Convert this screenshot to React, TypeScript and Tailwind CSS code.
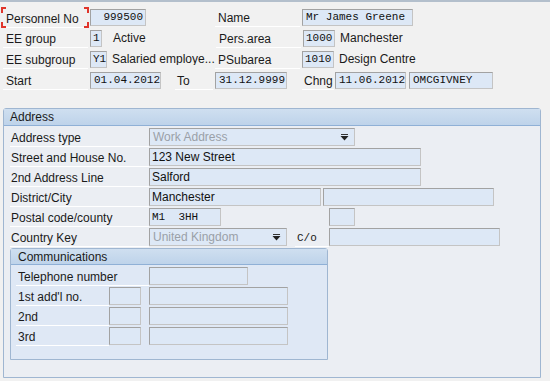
import React from "react";

const sans = { fontFamily: '"Liberation Sans", Arial, sans-serif' };
const mono = { fontFamily: '"Liberation Mono", "DejaVu Sans Mono", monospace' };

// label with the faint underline SAP draws under field captions
const Label: React.FC<{ text: string; w: string; pl?: string; className?: string }> = ({
  text,
  w,
  pl = "pl-[3px]",
  className,
}) => (
  <div
    className={`${w} ${pl} h-[19px] flex items-end pb-[1px] border-b border-white text-[12px] text-[#1a1a1a] leading-none ${className ?? ""}`}
    style={sans}
  >
    <span className="pb-[1px]">{text}</span>
  </div>
);

const Field: React.FC<{
  value?: string;
  w: string;
  right?: boolean;
  mono?: boolean;
  h?: string;
  className?: string;
}> = ({ value = "", w, right, mono: isMono = true, h = "h-[17px]", className }) => (
  <div
    className={`${w} ${h} shrink-0 flex items-center px-[2px] bg-[#dde8f6] border border-[#a2a2a2] border-b-[#c4c4c4] border-r-[#c4c4c4] text-[#111] leading-none ${
      right ? "justify-end" : ""
    } ${isMono ? "text-[11px]" : "text-[12px]"} ${className ?? ""}`}
    style={isMono ? mono : sans}
  >
    <span className="whitespace-pre">{value}</span>
  </div>
);

const Arrow = () => (
  <svg width="9" height="7" viewBox="0 0 9 7">
    <rect x="1" y="0" width="7" height="1" fill="#333" />
    <path d="M0.5 2 L8.5 2 L4.5 6.5 Z" fill="#222" />
  </svg>
);

const Select: React.FC<{ value: string; w: string }> = ({ value, w }) => (
  <div
    className={`${w} h-[18px] shrink-0 flex items-center justify-between pl-[3px] pr-[5px] bg-[#dde8f6] border border-[#a2a2a2] border-b-[#c4c4c4] border-r-[#c4c4c4] text-[12px] text-[#9aa0a8] leading-none`}
    style={sans}
  >
    <span>{value}</span>
    <Arrow />
  </div>
);

const Text: React.FC<{ text: string; className?: string }> = ({ text, className }) => (
  <span className={`text-[12px] text-[#1a1a1a] leading-none whitespace-nowrap ${className ?? ""}`} style={sans}>
    {text}
  </span>
);

const Corner: React.FC<{ pos: string }> = ({ pos }) => (
  <span className={`absolute w-[5px] h-[6px] border-[#e0352b] ${pos}`} />
);

export default function App() {
  return (
    <div className="w-[550px] h-[381px] overflow-hidden bg-[#f1f1f1] border-t-2 border-[#b3bfcc]">
      {/* header block */}
      <div className="pt-[5px] flex flex-col gap-[1px]">
        <div className="h-[20px] flex items-center">
          <div className="relative ml-[1px] w-[88px] h-[21px] flex items-end">
            <Corner pos="left-0 top-0 border-l-2 border-t-2" />
            <Corner pos="right-0 top-0 border-r-2 border-t-2" />
            <Corner pos="left-0 bottom-0 border-l-2 border-b-2" />
            <Corner pos="right-0 bottom-0 border-r-2 border-b-2" />
            <Label text="Personnel No" w="w-[85px] ml-[2px]" />
          </div>
          <Field value="999500" w="w-[56px]" right className="ml-[1px]" />
          <Label text="Name" w="w-[85px]" className="ml-[69px]" />
          <Field value="Mr James Greene" w="w-[111px]" className="ml-[2px] pl-[3px]" />
        </div>
        <div className="h-[20px] flex items-center">
          <Label text="EE group" w="w-[85px]" className="ml-[3px]" />
          <Field value="1" w="w-[12px]" className="ml-[2px]" />
          <Text text="Active" className="ml-[11px] w-[103px]" />
          <Label text="Pers.area" w="w-[85px]" />
          <Field value="1000" w="w-[32px]" className="ml-[2px]" />
          <Text text="Manchester" className="ml-[5px]" />
        </div>
        <div className="h-[20px] flex items-center">
          <Label text="EE subgroup" w="w-[85px]" className="ml-[3px]" />
          <Field value="Y1" w="w-[17px]" className="ml-[2px]" />
          <Text text="Salaried employe..." className="ml-[5px] w-[103px] overflow-hidden" />
          <Label text="PSubarea" w="w-[85px]" />
          <Field value="1010" w="w-[32px]" className="ml-[2px]" />
          <Text text="Design Centre" className="ml-[5px]" />
        </div>
        <div className="h-[20px] flex items-center">
          <Label text="Start" w="w-[85px]" className="ml-[3px]" />
          <Field value="01.04.2012" w="w-[71px]" className="ml-[2px] pl-[3px]" />
          <Label text="To" w="w-[38px]" pl="pl-[2px]" className="ml-[14px]" />
          <Field value="31.12.9999" w="w-[72px]" className="ml-[2px] pl-[3px]" />
          <Label text="Chng" w="w-[32px]" pl="pl-[2px]" className="ml-[15px]" />
          <Field value="11.06.2012" w="w-[71px]" className="ml-[1px] pl-[3px]" />
          <Field value="OMCGIVNEY" w="w-[84px]" className="ml-[3px] pl-[3px]" />
        </div>
      </div>

      {/* address panel */}
      <div className="mt-[18px] ml-[3px] w-[538px] h-[270px] bg-[#ebeef3] border border-[#9fb6d1] rounded-tr-[3px] rounded-tl-[3px]">
        <div className="h-[17px] flex items-center pl-[6px] bg-gradient-to-b from-[#cfdff0] to-[#bed3ea] border-b border-[#8fb0d6]">
          <Text text="Address" className="text-[12px]" />
        </div>
        <div className="pt-[2px] pl-[6px] flex flex-col gap-[2px]">
          <div className="h-[18px] flex items-center">
            <Label text="Address type" w="w-[139px]" pl="pl-[1px]" />
            <Select value="Work Address" w="w-[206px]" />
          </div>
          <div className="h-[18px] flex items-center">
            <Label text="Street and House No." w="w-[139px]" pl="pl-[1px]" />
            <Field value="123 New Street" w="w-[272px]" h="h-[18px]" mono={false} />
          </div>
          <div className="h-[18px] flex items-center">
            <Label text="2nd Address Line" w="w-[139px]" pl="pl-[1px]" />
            <Field value="Salford" w="w-[272px]" h="h-[18px]" mono={false} />
          </div>
          <div className="h-[18px] flex items-center">
            <Label text="District/City" w="w-[139px]" pl="pl-[1px]" />
            <Field value="Manchester" w="w-[172px]" h="h-[18px]" mono={false} />
            <Field w="w-[171px]" h="h-[18px]" className="ml-[2px]" />
          </div>
          <div className="h-[18px] flex items-center">
            <Label text="Postal code/county" w="w-[139px]" pl="pl-[1px]" />
            <Field value="M1  3HH" w="w-[72px]" h="h-[18px]" />
            <Field w="w-[26px]" h="h-[18px]" className="ml-[108px]" />
          </div>
          <div className="h-[18px] flex items-center">
            <Label text="Country Key" w="w-[139px]" pl="pl-[1px]" />
            <Select value="United Kingdom" w="w-[138px]" />
            <div
              className="ml-[8px] w-[34px] h-[19px] flex items-end pl-[2px] pb-[2px] border-b border-white text-[11px] leading-none text-[#1a1a1a]"
              style={mono}
            >
              C/o
            </div>
            <Field w="w-[171px]" h="h-[18px]" />
          </div>

          {/* communications */}
          <div className="w-[318px] h-[112px] bg-[#dfe8f5] border border-[#9fb6d1] rounded-tr-[3px] rounded-tl-[3px]">
            <div className="h-[16px] flex items-center pl-[7px] bg-gradient-to-b from-[#cfdff0] to-[#bed3ea] border-b border-[#8fb0d6]">
              <Text text="Communications" />
            </div>
            <div className="pt-[2px] pl-[5px] flex flex-col gap-[2px]">
              <div className="h-[18px] flex items-center">
                <Label text="Telephone number" w="w-[133px]" pl="pl-[2px]" />
                <Field w="w-[99px]" h="h-[18px]" />
              </div>
              {["1st add'l no.", "2nd", "3rd"].map((t) => (
                <div key={t} className="h-[18px] flex items-center">
                  <Label text={t} w="w-[93px]" pl="pl-[2px]" />
                  <Field w="w-[32px]" h="h-[18px]" />
                  <Field w="w-[139px]" h="h-[18px]" className="ml-[8px]" />
                </div>
              ))}
            </div>
          </div>
        </div>
      </div>
    </div>
  );
}
